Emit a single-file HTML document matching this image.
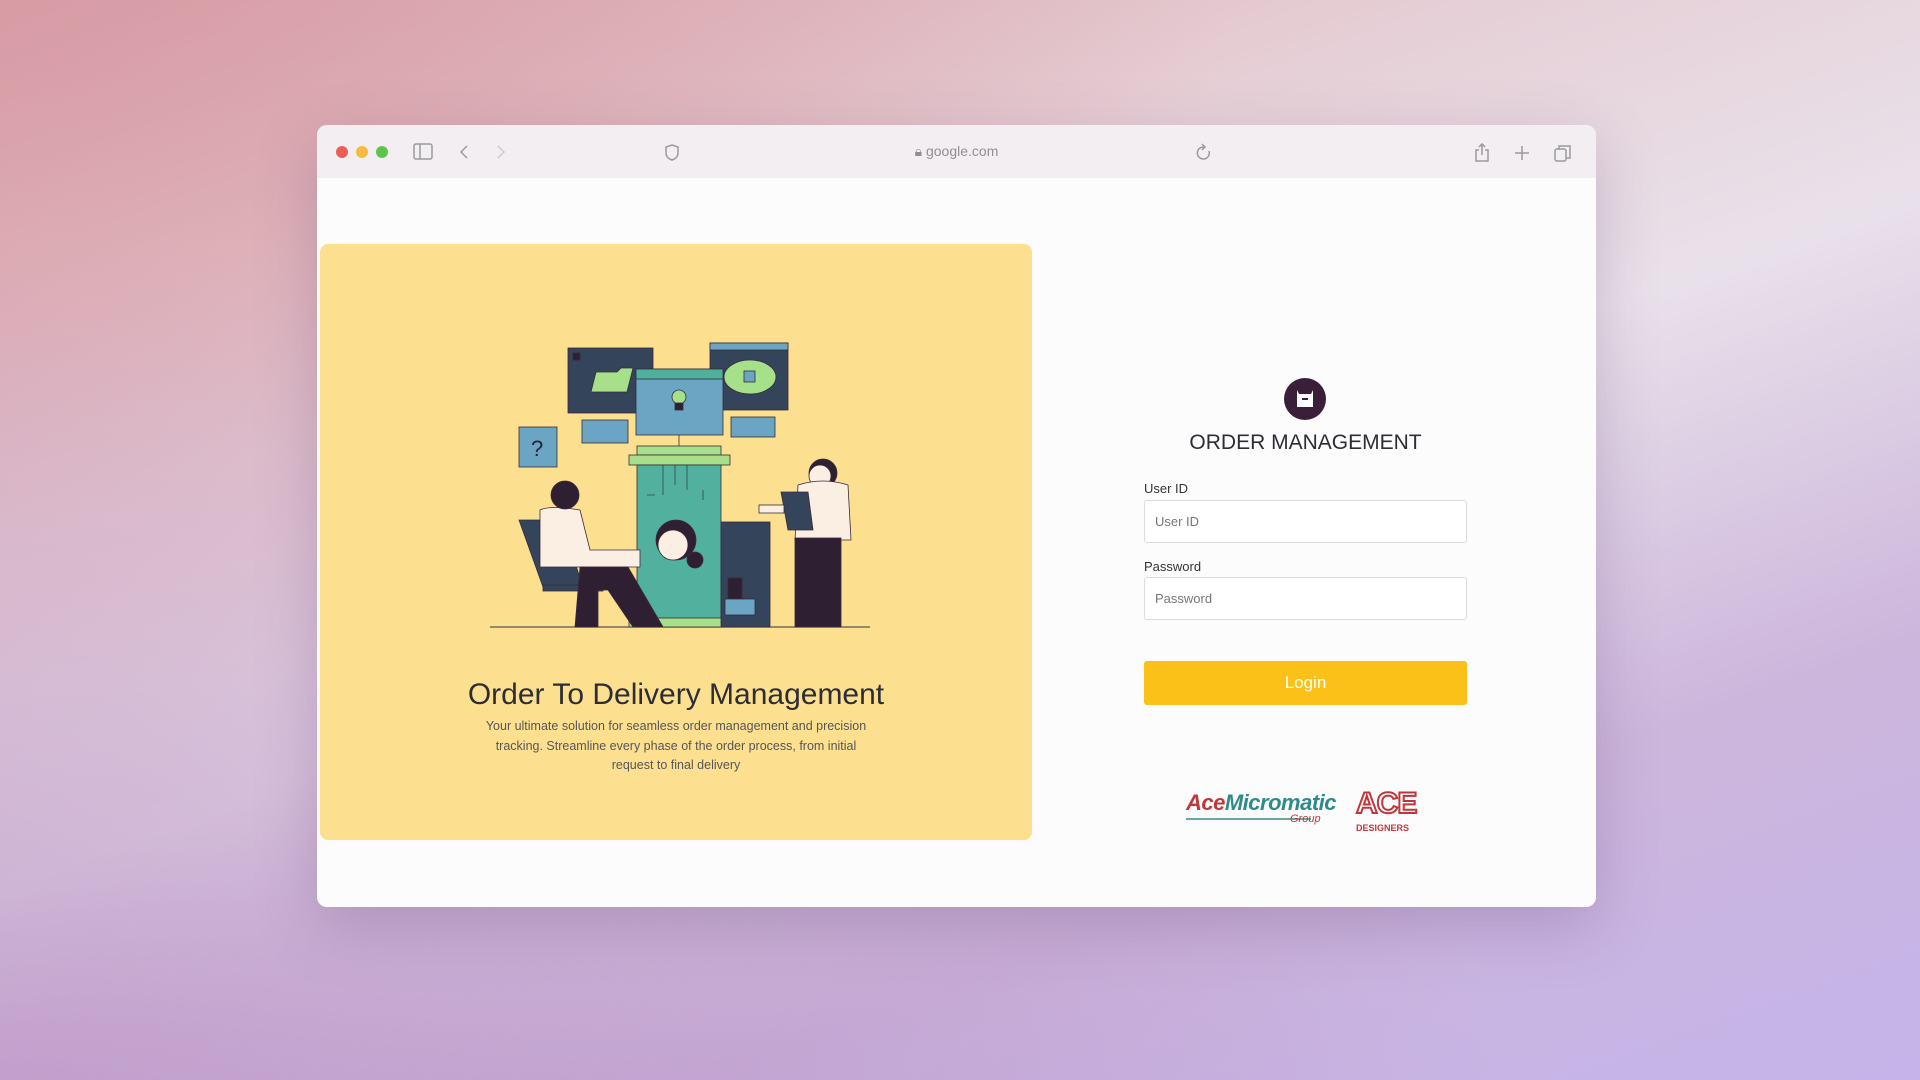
<!DOCTYPE html>
<html><head><meta charset="utf-8"><style>
*{margin:0;padding:0;box-sizing:border-box}
body{width:1920px;height:1080px;overflow:hidden;font-family:"Liberation Sans",sans-serif;
background:linear-gradient(160deg,#d9a3ab 0%,#e6cfd6 30%,#e9e1ea 50%,#cdb6dc 75%,#c5b4ea 100%);position:relative}
.bl{position:absolute;inset:0;background:radial-gradient(ellipse at 0% 100%,rgba(170,120,185,.55),transparent 55%),radial-gradient(ellipse at 0% 0%,rgba(215,150,160,.6),transparent 45%)}
.win{position:absolute;left:317px;top:125px;width:1279px;height:782px;background:#fdfcfd;border-radius:10px;overflow:hidden;box-shadow:0 20px 60px rgba(90,60,110,.25)}
.bar{height:53px;background:#f3eef1;position:relative;color:#9a9a9f}
.dot{position:absolute;top:21px;width:12px;height:12px;border-radius:50%}
.url{position:absolute;left:0;right:0;top:18px;text-align:center;font-size:14px;color:#8f8f95}
.panel{position:absolute;left:3px;top:119px;width:712px;height:596px;background:#fde08f;border-radius:8px}
.t1{position:absolute;left:0;width:712px;top:434px;text-align:center;font-size:30px;color:#2d2d35}
.t2{position:absolute;left:106px;width:500px;top:473px;text-align:center;font-size:12.5px;line-height:19.5px;color:#55555b;white-space:nowrap}
.r{position:absolute;left:827px;width:323px}
label{position:absolute;font-size:13px;color:#333}
.in{position:absolute;height:43px;border:1px solid #dcdce0;border-radius:3px;background:#fff;font-size:13px;color:#777;padding:13px 10px}
</style></head><body><div class="bl"></div>
<div class="win">
<div class="bar">
<div class="dot" style="left:19px;background:#ec5f57"></div><div class="dot" style="left:39px;background:#f4bd3f"></div><div class="dot" style="left:59px;background:#5ec54a"></div>
<svg style="position:absolute;left:96px;top:17px" width="300" height="20" fill="none" stroke="#9a9aa0" stroke-width="1.5">
<rect x="1" y="2" width="18" height="15" rx="2"/><line x1="7" y1="2" x2="7" y2="17"/>
<path d="M54 4l-6 6 6 6"/><path d="M85 4l6 6-6 6" stroke="#ccc"/>
<path d="M259 3l6 2v6c0 4-3 6-6 7-3-1-6-3-6-7V5z"/></svg>
<div class="url">🔒︎ google.com</div>
<svg style="position:absolute;left:873px;top:18px" width="420" height="20" fill="none" stroke="#9a9aa0" stroke-width="1.5">
<path d="M14 4a6 6 0 1 0 5 4"/><path d="M12 1l3 3-3 3"/>
<path d="M289 7h-3v11h12V7h-3M292 1v11M289 4l3-3 3 3"/><path d="M332 3v14M325 10h14"/>
<rect x="365" y="6" width="11" height="12" rx="2"/><path d="M369 6V3h11v12h-4"/></svg>
</div>
<div class="panel">
<svg style="position:absolute;left:0;top:0" width="712" height="596" viewBox="317 244 712 596">
<g stroke="#3a2a3a" stroke-width="0.8">
<line x1="487" y1="627" x2="867" y2="627" stroke="#555" stroke-width="1.2"/>
<rect x="565" y="348" width="85" height="65" fill="#34445a"/>
<rect x="570" y="353" width="7" height="7" fill="#2e1f33"/>
<polygon points="593,372 614,372 618,368 630,368 624,392 588,392" fill="#a6e08a"/>
<rect x="707" y="343" width="78" height="67" fill="#34445a"/><rect x="707" y="343" width="78" height="7" fill="#6aa6c4"/>
<ellipse cx="747" cy="377" rx="26" ry="17" fill="#a6e08a"/><rect x="741" y="371" width="11" height="11" fill="#6aa6c4"/>
<rect x="633" y="369" width="87" height="66" fill="#6aa6c4"/><rect x="633" y="369" width="87" height="10" fill="#4fb09e"/>
<circle cx="676" cy="397" r="7" fill="#a6e08a"/><rect x="672" y="403" width="8" height="7" fill="#2e1f33"/>
<rect x="516" y="427" width="38" height="40" fill="#6aa6c4"/><text x="528" y="456" font-size="22" fill="#2e1f33" stroke="none">?</text>
<rect x="579" y="420" width="46" height="23" fill="#6aa6c4"/><rect x="728" y="417" width="44" height="20" fill="#6aa6c4"/>
<line x1="676" y1="435" x2="676" y2="446"/>
<rect x="634" y="446" width="84" height="9" fill="#a6e08a"/><rect x="626" y="455" width="101" height="10" fill="#a6e08a"/>
<rect x="634" y="465" width="84" height="155" fill="#52b09e"/><rect x="626" y="618" width="101" height="9" fill="#a6e08a"/>
<path d="M660 465v30M672 465v20M684 465v25M652 495h-8M700 490v10" stroke="#2e4a48" fill="none"/>
<rect x="718" y="522" width="49" height="105" fill="#34445a"/><rect x="725" y="578" width="14" height="34" fill="#2e1f33"/><rect x="722" y="599" width="30" height="16" fill="#6aa6c4"/>
<circle cx="673" cy="540" r="20" fill="#2e1f33"/><circle cx="670" cy="545" r="15" fill="#fbeee2"/><circle cx="692" cy="560" r="8" fill="#2e1f33"/>
<polygon points="516,520 558,520 580,587 540,587" fill="#34445a"/>
<path d="M537 510q10-5 40 0l10 40h50v17h-100z" fill="#fbeee2"/>
<circle cx="562" cy="495" r="14" fill="#2e1f33"/>
<rect x="540" y="585" width="60" height="6" fill="#34445a"/>
<polygon points="577,567 625,567 660,627 630,627 605,590 595,590 595,627 572,627" fill="#2e1f33"/>
<circle cx="820" cy="473" r="14" fill="#2e1f33"/><circle cx="817" cy="476" r="11" fill="#fbeee2"/>
<path d="M795 485q25-8 50 0l3 55h-56z" fill="#fbeee2"/>
<rect x="792" y="538" width="46" height="89" fill="#2e1f33"/>
<polygon points="778,492 805,492 810,530 785,530" fill="#34445a"/>
<rect x="756" y="505" width="25" height="8" fill="#fbeee2"/>
</g></svg>
<div class="t1">Order To Delivery Management</div>
<div class="t2">Your ultimate solution for seamless order management and precision<br>tracking. Streamline every phase of the order process, from initial<br>request to final delivery</div>
</div>
<div class="r" style="top:0">
<div style="position:absolute;left:140px;top:253px;width:42px;height:42px;border-radius:50%;background:#3a1f3a"></div>
<svg style="position:absolute;left:150px;top:262px" width="22" height="22"><path d="M3 3l2 4h12l2-4v17H3z" fill="#fff"/><rect x="8" y="11" width="6" height="2" fill="#3a1f3a"/></svg>
<div style="position:absolute;left:0;width:323px;top:306px;text-align:center;font-size:21px;color:#2d2d35">ORDER MANAGEMENT</div>
<label style="left:0;top:356px">User ID</label>
<div class="in" style="left:0;top:375px;width:323px">User ID</div>
<label style="left:0;top:434px">Password</label>
<div class="in" style="left:0;top:452px;width:323px">Password</div>
<div style="position:absolute;left:0;top:536px;width:323px;height:44px;background:#fcc118;border-radius:3px;color:#fff;font-size:17px;text-align:center;line-height:44px">Login</div>
<div style="position:absolute;left:42px;top:665px;font:italic bold 22px 'Liberation Sans',sans-serif;color:#c0373b;letter-spacing:-.5px">Ace<span style="color:#2e8c88">Micromatic</span></div>
<div style="position:absolute;left:42px;top:693px;width:125px;height:2px;background:#6aa8a0"></div>
<div style="position:absolute;left:146px;top:688px;font:italic 11px 'Liberation Sans',sans-serif;color:#c0373b">Group</div>
<div style="position:absolute;left:212px;top:662px;font:bold 30px 'Liberation Sans',sans-serif;color:#fff;-webkit-text-stroke:2px #c0373b;letter-spacing:-1px">ACE</div>
<div style="position:absolute;left:212px;top:698px;font:bold 9px 'Liberation Sans',sans-serif;color:#c0373b">DESIGNERS</div>
</div>
</div>
</body></html>
